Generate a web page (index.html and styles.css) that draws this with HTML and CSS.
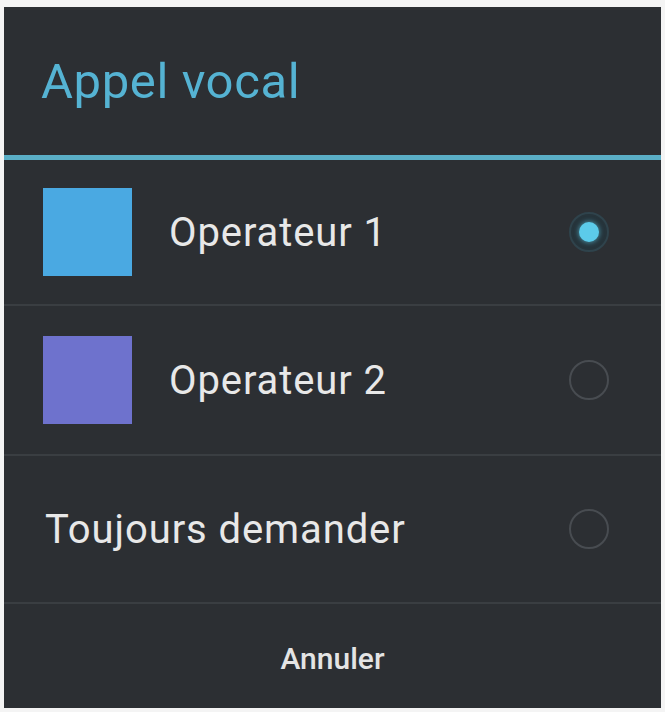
FILE: index.html
```html
<!DOCTYPE html>
<html lang="fr">
<head>
<meta charset="utf-8">
<title>Appel vocal</title>
<link rel="stylesheet" href="styles.css">
</head>
<body>
<div class="dialog">
  <div class="header"><h1 class="title">Appel vocal</h1></div>
  <div class="accent"></div>
  <ul class="list">
    <li class="row row-first">
      <span class="swatch swatch-blue"></span>
      <span class="label">Operateur 1</span>
      <span class="radio radio-on"><span class="dot"></span></span>
    </li>
    <li class="row row-second">
      <span class="swatch swatch-purple"></span>
      <span class="label">Operateur 2</span>
      <span class="radio"></span>
    </li>
    <li class="row row-third">
      <span class="label label-plain">Toujours demander</span>
      <span class="radio"></span>
    </li>
  </ul>
  <div class="footer"><button class="btn">Annuler</button></div>
</div>
</body>
</html>
```
FILE: styles.css
```css
html, body {
  margin: 0;
  padding: 0;
  background: #f4f4f4;
}
body {
  padding: 7px 4px 4px 4px;
  font-family: Roboto, "Liberation Sans", sans-serif;
}
.dialog {
  width: 657px;
  height: 701px;
  background: #2c2f33;
  display: flex;
  flex-direction: column;
}
.header {
  height: 148px;
  display: flex;
  align-items: center;
  padding-left: 37px;
  box-sizing: border-box;
}
.title {
  margin: 0;
  font-weight: 400;
  font-size: 49px;
  color: #55b3d3;
  letter-spacing: 0.6px;
}
.accent {
  height: 5px;
  background: #5aaec6;
}
.list {
  list-style: none;
  margin: 0;
  padding: 0;
}
.row {
  box-sizing: border-box;
  border-bottom: 2px solid #3a3e42;
  display: flex;
  align-items: center;
  padding: 0 52px 0 39px;
}
.row-first { height: 146px; }
.row-second { height: 150px; }
.row-third { height: 148px; }
.swatch {
  width: 89px;
  height: 88px;
  flex: none;
  margin-right: 37px;
}
.swatch-blue { background: #4aa9e2; }
.swatch-purple { background: #6e72cd; }
.label {
  flex: 1;
  font-size: 40px;
  color: #e8e8e8;
  letter-spacing: 0.9px;
}
.label-plain { margin-left: 2px; }
.radio {
  width: 40px;
  height: 40px;
  box-sizing: border-box;
  border-radius: 50%;
  border: 2px solid #484c51;
  flex: none;
  display: flex;
  align-items: center;
  justify-content: center;
}
.radio-on {
  border: 2px solid #2f434c;
  background: #26343b;
}
.dot {
  width: 20px;
  height: 20px;
  border-radius: 50%;
  background: #5ccbea;
  box-shadow: 0 0 4px 1px rgba(92, 203, 234, 0.5);
}
.footer {
  flex: 1;
  display: flex;
  align-items: center;
  justify-content: center;
}
.btn {
  background: none;
  border: none;
  font-family: Roboto, "Liberation Sans", sans-serif;
  font-size: 30px;
  font-weight: 500;
  color: #e4e4e4;
  padding: 0;
  margin-top: 4px;
}
```
